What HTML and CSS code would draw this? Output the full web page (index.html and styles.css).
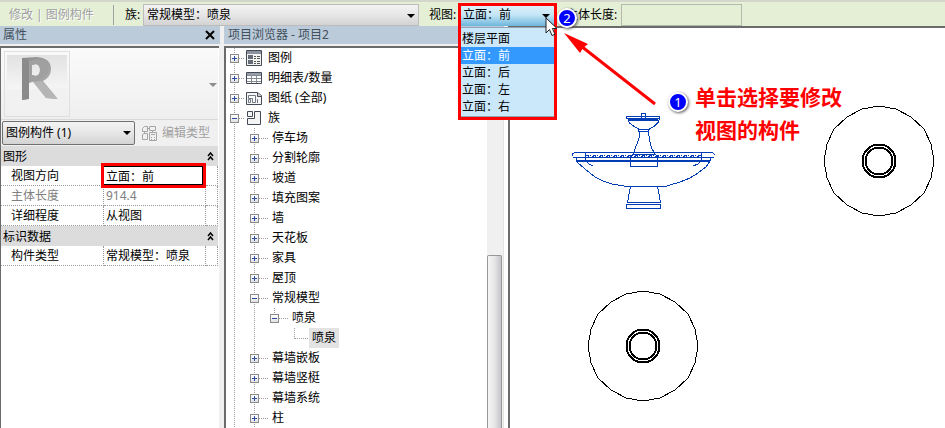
FILE: index.html
```html
<!DOCTYPE html>
<html lang="zh-CN">
<head>
  <meta charset="utf-8">
  <title>项目浏览器 - 项目2</title>
  <link rel="stylesheet" href="styles.css">
</head>
<body>
  <header class="options-bar">
    <span class="mode">修改 | 图例构件</span>
    <label class="family-label" for="family">族:</label>
    <div class="combo family">
      <select id="family"><option>常规模型：喷泉</option></select>
    </div>
    <label class="view-label" for="view">视图:</label>
    <div class="combo view">
      <select id="view"><option>立面：前</option></select>
      <ul class="view-list">
        <li>楼层平面</li>
        <li class="selected">立面：前</li>
        <li>立面：后</li>
        <li>立面：左</li>
        <li>立面：右</li>
      </ul>
      <div class="frame"></div>
      <svg class="cursor" width="13" height="20" viewBox="0 0 13 20">
        <path d="M1 1v15l3.500-3.500 2.500 6 3-1.200-2.600-5.800H12z" fill="#fff" stroke="#222"/>
      </svg>
      <span class="badge badge-two">2</span>
    </div>
    <label class="length-label" for="length">主体长度:</label>
    <input class="length" id="length" type="text">
  </header>

  <main class="workspace">
    <section class="panel properties">
      <div class="panel-title">
        <span>属性</span>
        <button class="close" aria-label="关闭">
          <svg width="10" height="10" viewBox="0 0 10 10"><path d="M1 1l8 8M9 1l-8 8" stroke="#000" stroke-width="2"/></svg>
        </button>
      </div>
      <div class="panel-body">
        <div class="type-preview">
          <div class="thumb">
            <svg width="64" height="64" viewBox="0 0 64 64">
              <defs>
                <linearGradient id="floor" x1="0" y1="0" x2="0" y2="1">
                  <stop offset="0" stop-color="#e2e2e2"/>
                  <stop offset="1" stop-color="#f6f6f6"/>
                </linearGradient>
                <linearGradient id="face" x1="0" y1="0" x2="1" y2="1">
                  <stop offset="0" stop-color="#8d8d8d"/>
                  <stop offset="1" stop-color="#b9b9b9"/>
                </linearGradient>
              </defs>
              <path d="M2 3h60v33L2 38z" fill="url(#floor)"/>
              <path d="M2 38l60-2v22H2z" fill="#f1f1f1"/>
              <path fill-rule="evenodd" d="M17 6l15-1q14 1 14 12 0 8-8 12l15 18-12-1-13-17-5 2v16l-6 1zM27 13v10l4 1q4-1 4-6t-4-6z" fill="url(#face)"/>
              <path d="M17 6l7 3v38l-7 1z" fill="#8a8a8a"/>
              <path fill-rule="evenodd" d="M24 9l8-2q11 1 12 10-1 8-11 11l-9 3zM27 13v10l4 1q4-1 4-6t-4-6z" fill="#a0a0a0"/>
              <path d="M28 30l9-1 15 18-11-1z" fill="#b5b5b5"/>
            </svg>
          </div>
          <span class="drop"></span>
        </div>
        <div class="type-row">
          <div class="combo type">
            <select aria-label="类型"><option>图例构件 (1)</option></select>
          </div>
          <button class="edit-type" disabled>
            <svg width="17" height="17" viewBox="0 0 17 17" fill="none" stroke="#a5a5a5">
              <path d="M1.500 3.500l2-2h3v5h-5zM8.500 1.500h6v4h-6zM1.500 9.500l2-1h3v6h-5zM6.500 3.500h2M3.500 6.500v2M11.500 5.500v2M8.500 7.500h7v8h-7zM10 9.500h4M10 12.500h1M13 12.500h1M10 14.500h1M13 14.500h1"/>
            </svg>
            编辑类型
          </button>
        </div>
        <table class="props">
          <colgroup><col class="name"><col class="value"><col></colgroup>
          <tr class="group">
            <th colspan="2">图形</th>
            <th><svg width="7" height="9" viewBox="0 0 7 9" fill="none" stroke="#000" stroke-width="1.500"><path d="M1 4l2.500-3L6 4M1 8l2.500-3L6 8"/></svg></th>
          </tr>
          <tr>
            <td>视图方向</td>
            <td class="editing"><input type="text" value="立面：前" aria-label="视图方向"></td>
            <td></td>
          </tr>
          <tr class="muted"><td>主体长度</td><td>914.4</td><td></td></tr>
          <tr><td>详细程度</td><td>从视图</td><td></td></tr>
          <tr class="group">
            <th colspan="2">标识数据</th>
            <th><svg width="7" height="9" viewBox="0 0 7 9" fill="none" stroke="#000" stroke-width="1.500"><path d="M1 4l2.500-3L6 4M1 8l2.500-3L6 8"/></svg></th>
          </tr>
          <tr><td>构件类型</td><td>常规模型：喷泉</td><td></td></tr>
        </table>
      </div>
    </section>

    <section class="panel browser">
      <div class="panel-title"><span>项目浏览器 - 项目2</span></div>
      <div class="panel-body">
        <ul class="tree">
          <li>
            <div class="node"><button class="toggle" aria-label="展开"></button>
              <svg width="16" height="16" viewBox="0 0 16 16"><path d="M.5.5h15v15H.5z" fill="#f4f4f4" stroke="#444b57"/><path d="M1 1h14v3H1z" fill="#8b929d"/><path d="M2 5h5v4H2zM2 10h5v4H2z" fill="#656b76"/><path d="M8 6.500h2M11 6.500h3M8 8.500h2M11 8.500h3M8 11.500h2M11 11.500h3M8 13.500h2M11 13.500h3" stroke="#555"/></svg>
              <span>图例</span></div>
          </li>
          <li>
            <div class="node"><button class="toggle" aria-label="展开"></button>
              <svg width="16" height="16" viewBox="0 0 16 16"><path d="M.5 2.500h15v11H.5z" fill="#fff" stroke="#444b57"/><path d="M1 3h14v2H1z" fill="#9aa0aa"/><path d="M1 5.500h14M1 8.500h14M1 11.500h14M5.500 5v8M10.500 5v8" stroke="#858b95"/></svg>
              <span>明细表/数量</span></div>
          </li>
          <li>
            <div class="node"><button class="toggle" aria-label="展开"></button>
              <svg width="16" height="16" viewBox="0 0 16 16"><path d="M.5 2.500h11l4 3v9H.5z" fill="#f6f6f6" stroke="#444b57"/><path d="M11.500 2.500v4h4" fill="#ccc" stroke="#444b57"/><path d="M2.500 5.500h7v7h-3v-4h-4zM2.500 9.500h2v3h-2z" fill="#fff" stroke="#727985"/><path d="M11.500 9v4" stroke="#727985"/></svg>
              <span>图纸 (全部)</span></div>
          </li>
          <li>
            <div class="node"><button class="toggle open" aria-label="折叠"></button>
              <svg width="16" height="16" viewBox="0 0 16 16" fill="#f4f4f4" stroke="#444b57"><path d="M1.500 1.500h5v5h-5zM8.500 1.500h6v13h-13v-6h7z"/></svg>
              <span>族</span></div>
            <ul>
              <li><div class="node"><button class="toggle" aria-label="展开"></button><span>停车场</span></div></li>
              <li><div class="node"><button class="toggle" aria-label="展开"></button><span>分割轮廓</span></div></li>
              <li><div class="node"><button class="toggle" aria-label="展开"></button><span>坡道</span></div></li>
              <li><div class="node"><button class="toggle" aria-label="展开"></button><span>填充图案</span></div></li>
              <li><div class="node"><button class="toggle" aria-label="展开"></button><span>墙</span></div></li>
              <li><div class="node"><button class="toggle" aria-label="展开"></button><span>天花板</span></div></li>
              <li><div class="node"><button class="toggle" aria-label="展开"></button><span>家具</span></div></li>
              <li><div class="node"><button class="toggle" aria-label="展开"></button><span>屋顶</span></div></li>
              <li>
                <div class="node"><button class="toggle open" aria-label="折叠"></button><span>常规模型</span></div>
                <ul>
                  <li class="last">
                    <div class="node"><button class="toggle open" aria-label="折叠"></button><span>喷泉</span></div>
                    <ul>
                      <li class="last"><div class="node leaf"><span class="current">喷泉</span></div></li>
                    </ul>
                  </li>
                </ul>
              </li>
              <li><div class="node"><button class="toggle" aria-label="展开"></button><span>幕墙嵌板</span></div></li>
              <li><div class="node"><button class="toggle" aria-label="展开"></button><span>幕墙竖梃</span></div></li>
              <li><div class="node"><button class="toggle" aria-label="展开"></button><span>幕墙系统</span></div></li>
              <li><div class="node"><button class="toggle" aria-label="展开"></button><span>柱</span></div></li>
            </ul>
          </li>
        </ul>
        <div class="scrollbar"><div class="scroll-thumb"></div></div>
      </div>
    </section>

    <section class="canvas">
      <svg class="fountain" width="160" height="115" viewBox="0 0 160 115" fill="none" stroke="#003cb4" shape-rendering="crispEdges">
        <path d="M76.500 13.500h4v7h-4zM61 16.500h34M61.500 16v2h33v-2M64 18.500h29"/>
        <path d="M64 20h29" stroke-width="2"/>
        <path d="M62.500 18l2 5 4 3 5 3h11l5-3 4-4 1-4M73.500 29v2.500h10V29"/>
        <path d="M74.500 31v6l-3 8-3 8M83.500 31l1 9 2 8 3 5M68.500 54.500v-2h21v2"/>
        <path d="M7.500 56v-2l2-1.500h138l3 3M8 57.500h141M20.500 52v9M136.500 52v9M11.500 57v5M145.500 57v4"/>
        <path d="M21 55.500h115" stroke-dasharray="3 1 1 2"/>
        <path d="M23 56.500h112" stroke-dasharray="1 3 2 1"/>
        <path d="M12 61h133" stroke-width="2"/>
        <path d="M65.500 57.500h27v9h-27zM65.500 57l3-3h22l2 3"/>
        <path d="M12 62l8 7 10 8 8 4 9 3 15 2.500h38l15-4.500 10-4 8-5 8-6 4-6M21 61l3 3 4 2M136 61l-3 3-5 2"/>
        <path d="M65.500 86l-3 16.500h33l-3-16.500M61.500 104.500h34v4h-34z"/>
      </svg>
      <svg class="plan plan-right" width="112" height="112" viewBox="-56 -56 112 112" fill="none" stroke="#000" shape-rendering="crispEdges">
        <path d="M0-55l17 3 15 8 13 12 7 15 3 17-3 17-7 15-13 12-15 8-17 3-17-3-15-8-13-12-7-15-3-17 3-17 7-15 13-12 15-8z"/>
        <circle r="16.500" stroke-width="2"/><circle r="13.500" stroke-width="2"/>
      </svg>
      <svg class="plan plan-bottom" width="112" height="112" viewBox="-56 -56 112 112" fill="none" stroke="#000" shape-rendering="crispEdges">
        <path d="M0-55l17 3 15 8 13 12 7 15 3 17-3 17-7 15-13 12-15 8-17 3-17-3-15-8-13-12-7-15-3-17 3-17 7-15 13-12 15-8z"/>
        <circle r="16.500" stroke-width="2"/><circle r="13.500" stroke-width="2"/>
      </svg>
      <svg class="arrow" width="96" height="76" viewBox="0 0 96 76">
        <path d="M18 14l74 58" stroke="#f00" stroke-width="3"/>
        <path d="M1 1l24 11-5 4-3 5z" fill="#f00"/>
      </svg>
      <span class="badge badge-one">1</span>
      <p class="note">单击选择要修改<br>视图的构件</p>
    </section>
  </main>
</body>
</html>
```
FILE: styles.css
```css
* {
  box-sizing: border-box;
}

body {
  margin: 0;
  height: 100vh;
  display: flex;
  flex-direction: column;
  overflow: hidden;
  background: #f0f0f0;
  color: #000;
  font-family: "Noto Sans", "Noto Sans CJK SC", sans-serif;
  font-size: 12px;
  line-height: 20px;
}

button,
input,
select {
  margin: 0;
  padding: 0;
  border: 0;
  background: none;
  color: inherit;
  font: inherit;
}

ul {
  margin: 0;
  padding: 0;
  list-style: none;
}

/* options bar */
.options-bar {
  display: flex;
  align-items: center;
  height: 26px;
  padding: 4px 0 0 9px;
  background: #e4efd6;
  box-shadow: inset 0 2px #d2d6cb;
  white-space: nowrap;
  position: relative;
  z-index: 2;
}

.mode {
  width: 105px;
  border-right: 1px solid #a0a0a0;
  color: #a0a0a0;
  text-shadow: 1px 1px #fff;
}

.family-label {
  width: 29px;
  padding-left: 11px;
  flex: none;
}

.combo {
  position: relative;
  height: 22px;
  flex: none;
}

.combo::after,
.drop {
  content: "";
  position: absolute;
  right: 4px;
  top: 10px;
  border: 4px solid transparent;
  border-top-color: #000;
  border-bottom: 0;
}

.combo select {
  appearance: none;
  width: 100%;
  height: 100%;
  padding-left: 3px;
  border: 1px solid #bcbcbc;
  background: linear-gradient(#f3f3f3, #e6e6e6 50%, #d3d3d3);
}

.family {
  width: 276px;
}

.view-label {
  width: 42px;
  padding-left: 10px;
}

.view {
  width: 93px;
}

.combo.view select {
  padding-left: 2px;
  border: 0;
  background: linear-gradient(#e5f4fc, #c4e5f6 50%, #6eb6dc);
}

.view-list {
  position: absolute;
  left: 0;
  top: 23px;
  width: 93px;
  padding: 2px 0 1px;
  border: 1px solid #8fa5b5;
  border-width: 1px 0;
  background: #cbe8fa;
  line-height: 17px;
}

.view-list li {
  padding-left: 1px;
}

.view-list .selected {
  background: #3399ff;
  color: #fff;
}

.frame {
  position: absolute;
  left: -3px;
  top: -1px;
  width: 99px;
  height: 117px;
  border: 3px solid #f00;
  pointer-events: none;
}

.cursor {
  position: absolute;
  left: 84px;
  top: 13px;
  z-index: 1;
}

.length-label {
  width: 67px;
  padding-left: 12px;
}

.length {
  width: 121px;
  height: 22px;
  border: 1px solid #b4b9ae;
}

/* docked panels */
.workspace {
  flex: 1;
  min-height: 0;
  display: flex;
}

.panel {
  flex: none;
  display: flex;
  flex-direction: column;
}

.panel-title {
  height: 18px;
  padding: 0 4px;
  display: flex;
  align-items: center;
  justify-content: space-between;
  background: #bccbda;
  color: #42505c;
}

.close {
  display: flex;
  padding: 1px;
}

.panel-body {
  flex: 1;
  min-height: 0;
  margin-top: 2px;
  border-top: 2px solid #6b6b6b;
}

.properties {
  width: 220px;
  margin-right: 4px;
}

.properties .panel-title {
  padding-left: 3px;
}

.properties .panel-body {
  border-left: 1px solid #6b6b6b;
  padding-right: 1px;
  margin-right: 1px;
  background: #fff;
}

.type-preview {
  position: relative;
  height: 72px;
  padding: 3px;
  background: linear-gradient(#fafafa, #efefef);
  border-bottom: 1px solid #d9d9d9;
}

.type-preview .drop {
  right: 1px;
  top: 35px;
  border-top-color: #8c8c8c;
}

.thumb {
  width: 66px;
  height: 66px;
  border: 1px solid #e0e0e0;
}

.type-row {
  display: flex;
  align-items: center;
  height: 26px;
  gap: 6px;
  padding-left: 1px;
  background: #f0f0f0;
}

.type {
  width: 133px;
  height: 24px;
}

.combo.type select {
  border-color: #707070;
  border-radius: 2px;
}

.edit-type {
  display: flex;
  align-items: center;
  gap: 4px;
  color: #a0a0a0;
  white-space: nowrap;
}

.props {
  width: 100%;
  table-layout: fixed;
  border-collapse: separate;
  border-spacing: 0;
}

.props .name {
  width: 103px;
}

.props .value {
  width: 102px;
}

.props th,
.props td {
  height: 20px;
  padding: 0;
  line-height: 19px;
  font-weight: normal;
  text-align: left;
  white-space: nowrap;
}

.props th {
  padding-left: 2px;
  background: #dcdcdc;
}

.props th + th {
  padding-left: 1px;
}

.props th svg {
  display: block;
}

.props td {
  padding-left: 2px;
  border-right: 1px dotted #999;
  border-bottom: 1px dotted #999;
}

.props td:first-child {
  padding-left: 10px;
}

.props .muted td {
  color: #808080;
}

.props .editing {
  position: relative;
}

.editing input {
  position: absolute;
  left: -3px;
  top: -3px;
  width: 105px;
  height: 25px;
  padding-left: 2px;
  border: 3px solid #f00;
  background: #fff;
  box-shadow: inset 0 1px #000, inset 0 -1px #000, inset -1px 0 #000;
}

/* project browser */
.browser {
  width: 284px;
}

.browser .panel-title {
  margin-right: 4px;
}

.browser .panel-body {
  display: flex;
  padding-right: 4px;
  border-left: 2px solid #6b6b6b;
  background: #fff;
}

.tree {
  flex: 1;
  padding-left: 4px;
  overflow: hidden;
}

.tree li {
  background: repeating-linear-gradient(#a0a0a0 0 1px, transparent 1px 2px) 4px 0 / 1px 100% no-repeat;
}

.tree li.last {
  background-size: 1px 10px;
}

.tree ul {
  padding-left: 20px;
}

.node {
  display: flex;
  align-items: center;
  height: 20px;
}

/* dotted connector between toggle and label */
.node::before {
  content: "";
  order: 1;
  width: 5px;
  margin-right: 2px;
  border-top: 1px dotted #a0a0a0;
}

.tree ul .node::before {
  width: 9px;
  margin-right: 4px;
}

.node svg {
  order: 2;
  margin-right: 6px;
}

.node span {
  order: 3;
}

.toggle {
  width: 9px;
  height: 9px;
  border: 1px solid #8a8a8a;
  background:
    linear-gradient(#2a4c9c, #2a4c9c) center / 5px 1px no-repeat,
    linear-gradient(#2a4c9c, #2a4c9c) center / 1px 5px no-repeat,
    linear-gradient(#fff, #e2e2e2);
}

.toggle.open {
  background:
    linear-gradient(#2a4c9c, #2a4c9c) center / 5px 1px no-repeat,
    linear-gradient(#fff, #e2e2e2);
}

.tree ul .leaf::before {
  width: 14px;
  margin: 0 1px 0 4px;
}

.current {
  padding: 0 3px;
  background: #e3e3e3;
}

.scrollbar {
  width: 17px;
  padding-top: 207px;
  background: #f0f0f0;
  border-right: 1px solid #e3e3e3;
}

.scroll-thumb {
  width: 15px;
  height: 100%;
  border: 1px solid #979797;
  border-bottom: 0;
  border-radius: 2px 2px 0 0;
  background: linear-gradient(90deg, #f5f5f5, #e6e6e8 50%, #c4c4ca);
}

/* drawing area */
.canvas {
  flex: 1;
  position: relative;
  overflow: hidden;
  border-top: 2px solid #6b6b6b;
  border-left: 2px solid #6b6b6b;
  background: #fff;
}

.fountain,
.plan,
.arrow,
.note {
  position: absolute;
}

.fountain {
  left: 55px;
  top: 72px;
}

.plan-right {
  left: 313px;
  top: 77px;
}

.plan-bottom {
  left: 77px;
  top: 262px;
}

.arrow {
  left: 53px;
  top: 4px;
}

.note {
  left: 185px;
  top: 53px;
  margin: 0;
  color: #f00;
  font-size: 21px;
  font-weight: bold;
  line-height: 33px;
  white-space: nowrap;
}

.badge {
  position: absolute;
  width: 20px;
  height: 20px;
  border: 2px solid #fff;
  border-radius: 50%;
  background: #00f;
  box-shadow: 1px 1px 3px #555;
  color: #fff;
  font-size: 13px;
  line-height: 16px;
  text-align: center;
}

.badge-one {
  left: 158px;
  top: 64px;
}

.badge-two {
  left: 96px;
  top: 4px;
}
```
